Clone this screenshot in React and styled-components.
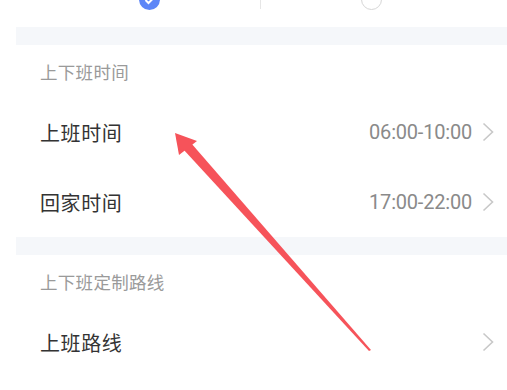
import React from 'react';
import styled, { createGlobalStyle } from 'styled-components';

const GlobalStyle = createGlobalStyle`
  html, body {
    margin: 0;
    padding: 0;
    background: #ffffff;
  }
  body {
    font-family: "Noto Sans CJK SC", "Noto Sans", sans-serif;
    width: 507px;
    height: 390px;
    overflow: hidden;
  }
`;

const Page = styled.div`
  position: relative;
  width: 507px;
  height: 390px;
  overflow: hidden;
  background: #fff;
`;

const TopBar = styled.div`
  height: 27px;
  display: flex;
  align-items: flex-end;
  overflow: hidden;
`;

const TopOption = styled.div`
  flex: ${(p) => p.$w}px 0 0;
  width: ${(p) => p.$w}px;
  display: flex;
  align-items: flex-end;
  height: 27px;
  padding-left: ${(p) => p.$pad}px;
  box-sizing: border-box;
`;

const Radio = styled.div`
  width: 21px;
  height: 21px;
  border-radius: 50%;
  margin-bottom: 17px;
  box-sizing: border-box;
  display: flex;
  align-items: center;
  justify-content: center;
  background: ${(p) => (p.$checked ? '#5d86f7' : '#fff')};
  border: ${(p) => (p.$checked ? 'none' : '1.5px solid #d6d6d6')};
`;

const Divider = styled.div`
  width: 1px;
  height: 10px;
  margin-bottom: 18px;
  background: #e6e6e6;
`;

const Sections = styled.div`
  margin-left: 16px;
`;

const Band = styled.div`
  height: 18px;
  background: #f5f7fa;
`;

const SectionHeader = styled.div`
  height: 52px;
  display: flex;
  align-items: center;
  padding-left: 24px;
  font-size: 17.5px;
  color: #9a9a9a;
  letter-spacing: 0.3px;
`;

const Row = styled.div`
  height: 70px;
  display: flex;
  align-items: center;
  padding-left: 24px;
  padding-right: 12px;
`;

const RowTitle = styled.div`
  flex: 1;
  font-size: 20px;
  color: #333;
  letter-spacing: 0.6px;
`;

const RowValue = styled.div`
  font-family: "Roboto", "Noto Sans", sans-serif;
  font-size: 20px;
  color: #8a8a8a;
  margin-right: 9px;
  letter-spacing: -0.2px;
`;

const Chevron = () => (
  <svg width="14" height="22" viewBox="0 0 14 22">
    <path d="M2.5 2.5 L11.5 11 L2.5 19.5" fill="none" stroke="#c8c8c8" strokeWidth="1.6" />
  </svg>
);

const ArrowLayer = styled.svg`
  position: absolute;
  left: 0;
  top: 0;
  pointer-events: none;
`;

const rows1 = [
  { title: '上班时间', value: '06:00-10:00' },
  { title: '回家时间', value: '17:00-22:00' },
];

export default function App() {
  return (
    <Page>
      <GlobalStyle />
      <TopBar>
        <TopOption $w={260} $pad={139}>
          <Radio $checked>
            <svg width="12" height="10" viewBox="0 0 12 10">
              <path d="M1.5 5 L4.5 8 L10.5 2" fill="none" stroke="#fff" strokeWidth="2" />
            </svg>
          </Radio>
        </TopOption>
        <Divider />
        <TopOption $w={246} $pad={100}>
          <Radio />
        </TopOption>
      </TopBar>
      <Sections>
        <Band />
        <SectionHeader>上下班时间</SectionHeader>
        {rows1.map((r) => (
          <Row key={r.title}>
            <RowTitle>{r.title}</RowTitle>
            <RowValue>{r.value}</RowValue>
            <Chevron />
          </Row>
        ))}
        <Band />
        <SectionHeader>上下班定制路线</SectionHeader>
        <Row>
          <RowTitle>上班路线</RowTitle>
          <Chevron />
        </Row>
      </Sections>
      <ArrowLayer width="507" height="390" viewBox="0 0 507 390">
        <polygon points="175,133 179,155 197,141" fill="#f6535a" />
        <polygon points="183,149 191,143 371,350 369,351" fill="#f6535a" />
      </ArrowLayer>
    </Page>
  );
}
